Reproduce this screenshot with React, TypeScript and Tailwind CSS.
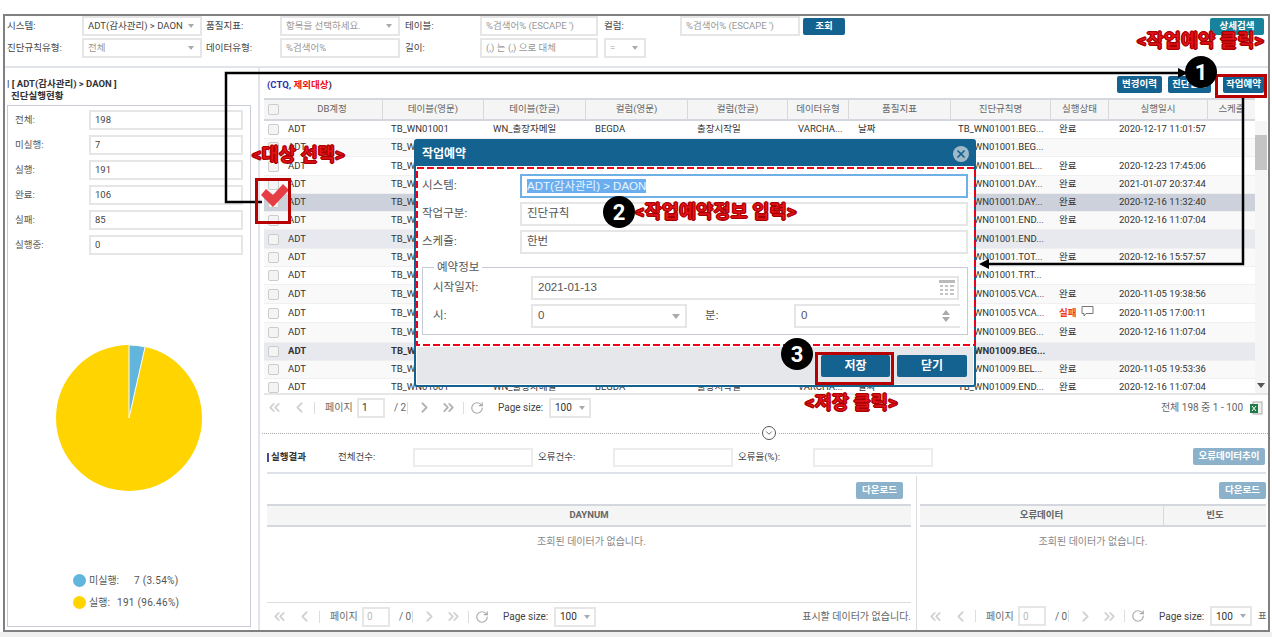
import { ChevronLeft, ChevronRight, ChevronsLeft, ChevronsRight, ChevronDown, RotateCw, X } from 'lucide-react';

const rows = [
  { rule: '01001.BEG...', state: '완료', time: '2020-12-17 11:01:57', bg: 'bg-white', h: 'h-[18px]' },
  { rule: '01001.BEG...', state: '', time: '', bg: 'bg-[#f9f9f9]', h: 'h-[18px]' },
  { rule: '01001.BEL...', state: '완료', time: '2020-12-23 17:45:06', bg: 'bg-white', h: 'h-[19px]' },
  { rule: '01001.DAY...', state: '완료', time: '2021-01-07 20:37:44', bg: 'bg-[#f9f9f9]', h: 'h-[18px]' },
  { rule: '01001.DAY...', state: '완료', time: '2020-12-16 11:32:40', bg: 'bg-[#cdd1dc]', h: 'h-[18px]' },
  { rule: '01001.END...', state: '완료', time: '2020-12-16 11:07:04', bg: 'bg-[#f9f9f9]', h: 'h-[18px]' },
  { rule: '01001.END...', state: '', time: '', bg: 'bg-[#e8e9ee]', h: 'h-[19px]' },
  { rule: '01001.TOT...', state: '완료', time: '2020-12-16 15:57:57', bg: 'bg-[#f9f9f9]', h: 'h-[18px]' },
  { rule: '01001.TRT...', state: '', time: '', bg: 'bg-white', h: 'h-[18px]' },
  { rule: '01005.VCA...', state: '완료', time: '2020-11-05 19:38:56', bg: 'bg-[#f9f9f9]', h: 'h-[19px]' },
  { rule: '01005.VCA...', state: '실패', time: '2020-11-05 17:00:11', bg: 'bg-white', h: 'h-[19px]' },
  { rule: '01009.BEG...', state: '완료', time: '2020-12-16 11:07:04', bg: 'bg-[#f9f9f9]', h: 'h-[20px]' },
  { rule: '01009.BEG...', state: '', time: '', bg: 'bg-[#e8e9ee]', h: 'h-[18px]', bold: true },
  { rule: '01009.BEL...', state: '완료', time: '2020-11-05 19:53:36', bg: 'bg-[#f9f9f9]', h: 'h-[18px]' },
  { rule: '01009.END...', state: '완료', time: '2020-12-16 11:07:04', bg: 'bg-white', h: 'h-[18px]' },
];

const tableCols = 'grid grid-cols-[18px_101px_101px_102px_102px_100px_61px_102px_100px_58px_99px_47px]';
const headers = ['DB계정', '테이블(영문)', '테이블(한글)', '컬럼(영문)', '컬럼(한글)', '데이터유형', '품질지표', '진단규칙명', '실행상태', '실행일시', '스케줄'];
const stats = [['전체:', '198'], ['미실행:', '7'], ['실행:', '191'], ['완료:', '106'], ['실패:', '85'], ['실행중:', '0']];

function Field({ text, w, dim, arrow }: { text: string; w: string; dim?: boolean; arrow?: boolean }) {
  return (
    <div className={`${w} h-[20px] border-2 border-[#e6e6e6] bg-white flex items-center pl-[4px] pr-[6px] justify-between shrink-0 ${dim ? 'text-[#999]' : 'text-[#444]'}`}>
      <span className="truncate">{text}</span>
      {arrow && <span className="w-0 h-0 shrink-0 border-x-[3px] border-x-transparent border-t-[4px] border-t-[#aaa]" />}
    </div>
  );
}

function Check() {
  return <span className="block w-[11px] h-[11px] rounded-[2px] border border-[#ccc] bg-[#f4f4f4]" />;
}

function Pager({ page, total, muted }: { page: string; total: string; muted?: boolean }) {
  return (
    <div className="flex items-center text-[10px] text-[#666] h-[24px] whitespace-nowrap">
      <ChevronsLeft size={17} strokeWidth={2.5} className="text-[#d0d3d6] w-[17px]" />
      <ChevronLeft size={17} strokeWidth={2.5} className="text-[#d0d3d6] ml-[8px]" />
      <span className="w-px h-[12px] bg-[#ddd] ml-[6px]" />
      <span className="ml-[10px] w-[32px]">페이지</span>
      <span className={`w-[28px] h-[20px] border-2 border-[#e6e6e6] flex items-center pl-[3px] ${muted ? 'text-[#bbb]' : 'text-[#333]'}`}>{page}</span>
      <span className="ml-[9px] w-[13px]">{total}</span>
      <span className="w-px h-[12px] bg-[#ddd]" />
      <ChevronRight size={17} strokeWidth={2.5} className={`ml-[8px] ${muted ? 'text-[#d0d3d6]' : 'text-[#b0b3b6]'}`} />
      <ChevronsRight size={17} strokeWidth={2.5} className={`ml-[7px] ${muted ? 'text-[#d0d3d6]' : 'text-[#b0b3b6]'}`} />
      <span className="w-px h-[12px] bg-[#ddd] ml-[6px]" />
      <RotateCw size={14} strokeWidth={2} className="text-[#aaa] ml-[6px]" />
      <span className="ml-[14px] w-[51px] text-[#444]">Page size:</span>
      <div className="w-[42px] h-[20px] border-2 border-[#e6e6e6] flex items-center justify-between px-[4px] text-[#333]">
        100
        <span className="w-0 h-0 border-x-[3px] border-x-transparent border-t-[4px] border-t-[#aaa]" />
      </div>
    </div>
  );
}

function BlueBtn({ text, className }: { text: string; className: string }) {
  return <div className={`h-[17px] rounded-[2px] bg-[#14628f] text-white font-bold flex items-center justify-center text-[9.5px] ${className}`}>{text}</div>;
}

function Note({ text, className }: { text: string; className: string }) {
  return (
    <div className={`absolute text-[#e8141c] font-bold text-[18.7px] leading-none whitespace-nowrap [-webkit-text-stroke:0.6px_#a80000] [text-shadow:1px_0_0_#a80000,-1px_0_0_#a80000,0_1px_0_#a80000,0_-1px_0_#a80000] ${className}`}>
      {text}
    </div>
  );
}

function Badge({ n, className }: { n: string; className: string }) {
  return <div className={`absolute w-[32px] h-[32px] rounded-full bg-black text-white font-bold text-[22px] flex items-center justify-center ${className}`}>{n}</div>;
}

function ModalInput({ text, w }: { text: string; w: string }) {
  return <div className={`${w} h-[24px] border-2 border-[#e6e6e6] flex items-center pl-[5px] text-[11.5px] text-[#555]`}>{text}</div>;
}

export default function App() {
  return (
    <div className="relative w-[1272px] h-[637px] overflow-hidden bg-white text-[9.5px] text-[#444] [font-family:'Roboto','Noto_Sans_CJK_KR',sans-serif]">
      <div className="pt-[14px] pl-[3px]">
        <div className="w-[1267px] h-[618px] border-2 border-[#808080] flex flex-col">
          {/* search */}
          <div className="h-[52px] shrink-0 border-b-2 border-[#e2e4ec] flex flex-col gap-[1px]">
            <div className="flex items-center h-[20px]">
              <span className="w-[77px] pl-[2px]">시스템:</span>
              <Field text="ADT(감사관리) > DAON" w="w-[120px]" arrow />
              <span className="w-[78px] pl-[4px]">품질지표:</span>
              <Field text="항목을 선택하세요." w="w-[120px]" dim arrow />
              <span className="w-[80px] pl-[5px]">테이블:</span>
              <Field text="%검색어% (ESCAPE ')" w="w-[118px]" dim />
              <span className="w-[82px] pl-[6px]">컬럼:</span>
              <Field text="%검색어% (ESCAPE ')" w="w-[120px]" dim />
              <BlueBtn text="조회" className="ml-[3px] w-[42px]" />
              <BlueBtn text="상세검색" className="ml-auto mr-[4px] w-[54px] !bg-[#17829b]" />
            </div>
            <div className="flex items-center h-[20px] mt-[1px]">
              <span className="w-[77px] pl-[2px]">진단규칙유형:</span>
              <Field text="전체" w="w-[120px]" dim arrow />
              <span className="w-[78px] pl-[4px]">데이터유형:</span>
              <Field text="%검색어%" w="w-[120px]" dim />
              <span className="w-[80px] pl-[5px]">길이:</span>
              <Field text="(,) 는 (,) 으로 대체" w="w-[118px]" dim />
              <div className="ml-[6px]">
                <Field text="=" w="w-[42px]" dim arrow />
              </div>
            </div>
          </div>

          <div className="flex flex-1 min-h-0">
            {/* left panel */}
            <div className="w-[255px] shrink-0 border-r-2 border-[#e2e4ec] pl-[2px] flex flex-col">
              <div className="pt-[10px] h-[37px] font-bold text-[#333] leading-[12px]">
                <div>| [ ADT(감사관리) &gt; DAON ]</div>
                <div className="pl-[4px]">진단실행현황</div>
              </div>
              <div className="w-[244px] h-[522px] border border-[#c8cbd8] pt-[4px] flex flex-col">
                <div className="flex flex-col gap-[5px]">
                  {stats.map(([label, value]) => (
                    <div key={label} className="flex items-center h-[20px]">
                      <span className="w-[81px] pl-[7px] text-[#555]">{label}</span>
                      <Field text={value} w="w-[154px]" />
                    </div>
                  ))}
                </div>
                <svg width="146" height="146" viewBox="0 0 146 146" className="ml-[48px] mt-[90px] shrink-0">
                  <circle cx="73" cy="73" r="73" fill="#ffd400" />
                  <path d="M73 73 L73 0 A73 73 0 0 1 89.1 1.8 Z" fill="#62b6de" stroke="#fff" strokeWidth="1" />
                </svg>
                <div className="mt-[82px] ml-[65px] flex flex-col gap-[8px] text-[#555] text-[10px]">
                  <div className="flex items-center h-[14px]">
                    <span className="w-[13px] h-[13px] rounded-full bg-[#62b6de]" />
                    <span className="ml-[3px] w-[45px]">미실행:</span>
                    <span className="tracking-[0.3px]">7 (3.54%)</span>
                  </div>
                  <div className="flex items-center h-[14px]">
                    <span className="w-[13px] h-[13px] rounded-full bg-[#ffd400]" />
                    <span className="ml-[3px] w-[28px]">실행:</span>
                    <span className="tracking-[0.3px]">191 (96.46%)</span>
                  </div>
                </div>
              </div>
            </div>

            {/* right panel */}
            <div className="flex-1 min-w-0 flex flex-col">
              <div className="h-[30px] shrink-0 flex pl-[7px] relative">
                <span className="mt-[10px] font-bold text-[#1f2fb0]">(CTQ, <span className="text-[#f01010]">제외대상</span><span className="text-[#333]">)</span></span>
                <div className="ml-auto mr-[4px] mt-[8px] flex">
                  <BlueBtn text="변경이력" className="w-[45px]" />
                  <BlueBtn text="진단실행" className="ml-[6px] w-[43px]" />
                  <BlueBtn text="작업예약" className="ml-[12px] w-[41px]" />
                </div>
              </div>

              <div className="ml-[4px] w-[1003px] flex">
                <div className="w-[991px]">
                  <div className={`${tableCols} h-[23px] bg-[#f5f5f5] border-y-2 border-[#d5d7de] text-[#666]`}>
                    <span className="flex items-center justify-center"><Check /></span>
                    {headers.map((h) => (
                      <span key={h} className="flex items-center justify-center border-r border-[#d8d8d8] last:border-r-0">{h}</span>
                    ))}
                  </div>
                  <div className="h-[272px] overflow-hidden">
                    {rows.map((r, i) => (
                      <div key={i} className={`${tableCols} ${r.h} ${r.bg} ${r.bold ? 'font-bold' : ''} items-center border-b border-[#f0f0f0] text-[#333] whitespace-nowrap overflow-hidden`}>
                        <span className="flex justify-center"><Check /></span>
                        <span className="pl-[6px]">ADT</span>
                        <span className="pl-[8px]">TB_WN01001</span>
                        <span className="pl-[9px]">WN_출장자메일</span>
                        <span className="pl-[9px]">BEGDA</span>
                        <span className="pl-[9px]">출장시작일</span>
                        <span className="pl-[10px]">VARCHA...</span>
                        <span className="pl-[9px]">날짜</span>
                        <span className="pl-[7px]">TB_WN{r.rule}</span>
                        <span className={`pl-[8px] flex items-center ${r.state === '실패' ? 'text-[#f03a20] font-bold' : ''}`}>
                          {r.state}
                          {r.state === '실패' && (
                            <svg width="13" height="11" viewBox="0 0 13 11" className="ml-[5px] -mt-[3px]" fill="none" stroke="#777">
                              <path d="M1 .5h11v7H5l-2 2.5V7.5H1z" />
                            </svg>
                          )}
                        </span>
                        <span className="pl-[10px]">{r.time}</span>
                        <span />
                      </div>
                    ))}
                  </div>
                </div>
                <div className="w-[12px] bg-[#f5f5f5] relative flex flex-col">
                  <div className="h-[23px] bg-white" />
                  <div className="mt-[14px] h-[35px] bg-[#c4c4c4]" />
                  <span className="absolute bottom-[5px] left-[2px] w-0 h-0 border-x-[4px] border-x-transparent border-t-[5px] border-t-[#555]" />
                </div>
              </div>

              <div className="h-[27px] shrink-0 ml-[4px] border-t-2 border-[#e6e6e6] flex items-center pl-[2px]">
                <Pager page="1" total="/ 2" />
                <span className="ml-auto text-[#666] text-[10px]">전체 198 중 1 - 100</span>
                <svg width="14" height="14" viewBox="0 0 14 14" className="ml-[6px] mr-[5px]">
                  <rect x="4" y="1" width="9" height="12" fill="#eee" stroke="#aaa" />
                  <rect x="1" y="3" width="8" height="9" fill="#1f7a45" />
                  <path d="M3 5l4 5M7 5l-4 5" stroke="#fff" strokeWidth="1" />
                </svg>
              </div>

              {/* divider */}
              <div className="h-[26px] shrink-0 flex items-center ml-[2px]">
                <div className="flex-1 border-t border-dotted border-[#aaa]" />
                <span className="w-[14px] h-[14px] mx-[3px] rounded-full border border-[#555] flex items-center justify-center">
                  <ChevronDown size={10} strokeWidth={2} className="text-[#555]" />
                </span>
                <div className="w-[489px] border-t border-dotted border-[#aaa]" />
              </div>

              <div className="h-[28px] shrink-0 ml-[7px] mr-[2px] flex items-start pt-[2px] border-b-2 border-[#dfe1ea]">
                <span className="w-[71px] h-[18px] flex items-center font-bold text-[#333]"><span className="w-[2px] h-[9px] bg-[#4a4a9a] mr-[2px]" />실행결과</span>
                <span className="w-[75px] h-[18px] flex items-center">전체건수:</span>
                <div className="w-[120px] h-[19px] border-2 border-[#ececec]" />
                <span className="w-[80px] pl-[5px] h-[18px] flex items-center">오류건수:</span>
                <div className="w-[120px] h-[19px] border-2 border-[#ececec]" />
                <span className="w-[80px] pl-[5px] h-[18px] flex items-center">오류율(%):</span>
                <div className="w-[120px] h-[19px] border-2 border-[#ececec]" />
                <BlueBtn text="오류데이터추이" className="ml-auto mr-[1px] w-[72px] !bg-[#8bb2ca]" />
              </div>

              <div className="flex-1 min-h-0 flex">
                <div className="ml-[7px] w-[650px] border-r border-[#dcdcdc] flex flex-col mt-[2px]">
                  <div className="h-[28px] flex justify-end pt-[6px] pr-[13px]"><BlueBtn text="다운로드" className="w-[47px] !bg-[#8bb2ca]" /></div>
                  <div className="mr-[5px] h-[23px] bg-[#f5f5f5] border-y-2 border-[#d5d7de] flex items-center justify-center font-bold text-[#666]">DAYNUM</div>
                  <div className="mt-[7px] text-center text-[#888] text-[10px]">조회된 데이터가 없습니다.</div>
                  <div className="mt-auto mr-[5px] h-[28px] border-t border-[#dcdcdc] flex items-center pl-[4px]">
                    <Pager page="0" total="/ 0" muted />
                    <span className="ml-auto text-[#666] text-[10px]">표시할 데이터가 없습니다.</span>
                  </div>
                </div>
                <div className="flex-1 min-w-0 flex flex-col pl-[3px] pr-[2px] mt-[2px]">
                  <div className="h-[28px] flex justify-end pt-[6px]"><BlueBtn text="다운로드" className="w-[47px] !bg-[#8bb2ca]" /></div>
                  <div className="h-[23px] bg-[#f5f5f5] border-y-2 border-[#d5d7de] grid grid-cols-[244px_1fr] font-bold text-[#666]">
                    <span className="flex items-center justify-center border-r border-[#d8d8d8]">오류데이터</span>
                    <span className="flex items-center justify-center">빈도</span>
                  </div>
                  <div className="mt-[7px] text-center text-[#888] text-[10px]">조회된 데이터가 없습니다.</div>
                  <div className="mt-auto h-[28px] flex items-center pl-[7px] overflow-hidden">
                    <Pager page="0" total="/ 0" muted />
                    <span className="ml-[6px] whitespace-nowrap text-[#666]">표시</span>
                  </div>
                </div>
              </div>
            </div>
          </div>
        </div>
      </div>
      <div className="absolute left-0 right-0 bottom-0 h-[5px] bg-[#f0f0f0]" />

      {/* dialog */}
      <div className="absolute left-[414px] top-[139px] w-[562px] h-[248px] border-2 border-[#14628f] rounded-[3px] bg-white flex flex-col [font-family:'Liberation_Sans','Noto_Sans_CJK_KR',sans-serif]">
        <div className="h-[25px] shrink-0 bg-[#14628f] flex items-center justify-between pl-[6px] pr-[5px] text-white font-bold text-[12px]">
          작업예약
          <span className="w-[16px] h-[16px] rounded-full bg-[#9fb9c9] flex items-center justify-center">
            <X size={12} strokeWidth={3.5} className="text-[#14628f]" />
          </span>
        </div>
        <div className="flex-1 pt-[8px] pl-[6px] pr-[6px] text-[11.5px] text-[#555]">
          <div className="flex flex-col gap-[4px]">
            <div className="flex items-center">
              <span className="w-[98px]">시스템:</span>
              <div className="w-[448px] h-[24px] border-2 border-[#6fb1e6] flex items-center pl-[5px]">
                <span className="bg-[#6aaef0] text-[#eaf4ff] leading-[14px]">ADT(감사관리) &gt; DAON</span>
              </div>
            </div>
            <div className="flex items-center">
              <span className="w-[98px]">작업구분:</span>
              <ModalInput text="진단규칙" w="w-[448px]" />
            </div>
            <div className="flex items-center">
              <span className="w-[98px]">스케쥴:</span>
              <ModalInput text="한번" w="w-[448px]" />
            </div>
          </div>
          <div className="relative mt-[13px] w-[546px] h-[68px] border border-[#c8cbd4] pt-[8px] pl-[10px]">
            <span className="absolute left-[11px] -top-[8px] bg-white px-[3px] leading-[14px]">예약정보</span>
            <div className="flex items-center">
              <span className="w-[98px]">시작일자:</span>
              <div className="w-[428px] h-[24px] border-2 border-[#e6e6e6] flex items-center justify-between pl-[5px] pr-[2px]">
                2021-01-13
                <svg width="16" height="16" viewBox="0 0 16 16">
                  <rect x="0" y="0" width="16" height="3" fill="#bbb" />
                  <path d="M1 5h3v2H1zM6 5h3v2H6zM11 5h4v2h-4zM1 9h3v2H1zM6 9h3v2H6zM11 9h4v2h-4zM1 13h3v2H1zM6 13h3v2H6zM11 13h4v2h-4z" fill="#c4c4c4" />
                </svg>
              </div>
            </div>
            <div className="flex items-center mt-[4px]">
              <span className="w-[98px]">시:</span>
              <div className="w-[156px] h-[24px] border-2 border-[#e6e6e6] flex items-center justify-between pl-[5px] pr-[5px]">
                0
                <span className="w-0 h-0 border-x-[4px] border-x-transparent border-t-[5px] border-t-[#aaa]" />
              </div>
              <span className="w-[107px] pl-[18px]">분:</span>
              <div className="w-[166px] h-[24px] border-2 border-r-0 border-[#e6e6e6] flex items-center justify-between pl-[5px] pr-[10px]">
                0
                <span className="flex flex-col gap-[2px]">
                  <span className="w-0 h-0 border-x-[4px] border-x-transparent border-b-[5px] border-b-[#aaa]" />
                  <span className="w-0 h-0 border-x-[4px] border-x-transparent border-t-[5px] border-t-[#aaa]" />
                </span>
              </div>
            </div>
          </div>
        </div>
        <div className="h-[37px] shrink-0 mx-[1px] mb-[1px] bg-[#e6e7eb] flex items-center justify-end gap-[7px] pr-[6px]">
          <div className="w-[69px] h-[22px] rounded-[2px] bg-[#14628f] text-white font-bold text-[12px] flex items-center justify-center">저장</div>
          <div className="w-[70px] h-[22px] rounded-[2px] bg-[#14628f] text-white font-bold text-[12px] flex items-center justify-center">닫기</div>
        </div>
      </div>

      {/* annotation overlay */}
      <svg width="1272" height="637" className="absolute left-0 top-0 pointer-events-none">
        <path d="M262 202H226V73H1178" fill="none" stroke="#000" strokeWidth="2.5" />
        <path d="M1188 73l-10-5v10z" fill="#000" />
        <path d="M1243 97V264H988" fill="none" stroke="#000" strokeWidth="2.5" />
        <path d="M979 264l10-5v10z" fill="#000" />
        <path d="M261 195l5-6 7 6 10-11 6 6-16 17z" fill="#e53e45" />
        <rect x="417" y="168" width="558" height="177" fill="none" stroke="#f00018" strokeWidth="2" strokeDasharray="7 3" />
      </svg>
      <div className="absolute left-[1215px] top-[74px] w-[52px] h-[24px] border-[3px] border-[#b80000]" />
      <div className="absolute left-[255px] top-[178px] w-[36px] h-[46px] border-[3px] border-[#b80000]" />
      <div className="absolute left-[815px] top-[352px] w-[79px] h-[33px] border-[3px] border-[#b80000]" />
      <Badge n="1" className="left-[1185px] top-[56px]" />
      <Badge n="2" className="left-[603px] top-[196px]" />
      <Badge n="3" className="left-[781px] top-[338px]" />
      <Note text="<작업예약 클릭>" className="left-[1137px] top-[32px]" />
      <Note text="<대상 선택>" className="left-[252px] top-[146px]" />
      <Note text="<작업예약정보 입력>" className="left-[635px] top-[203px]" />
      <Note text="<저장 클릭>" className="left-[805px] top-[394px]" />
    </div>
  );
}
